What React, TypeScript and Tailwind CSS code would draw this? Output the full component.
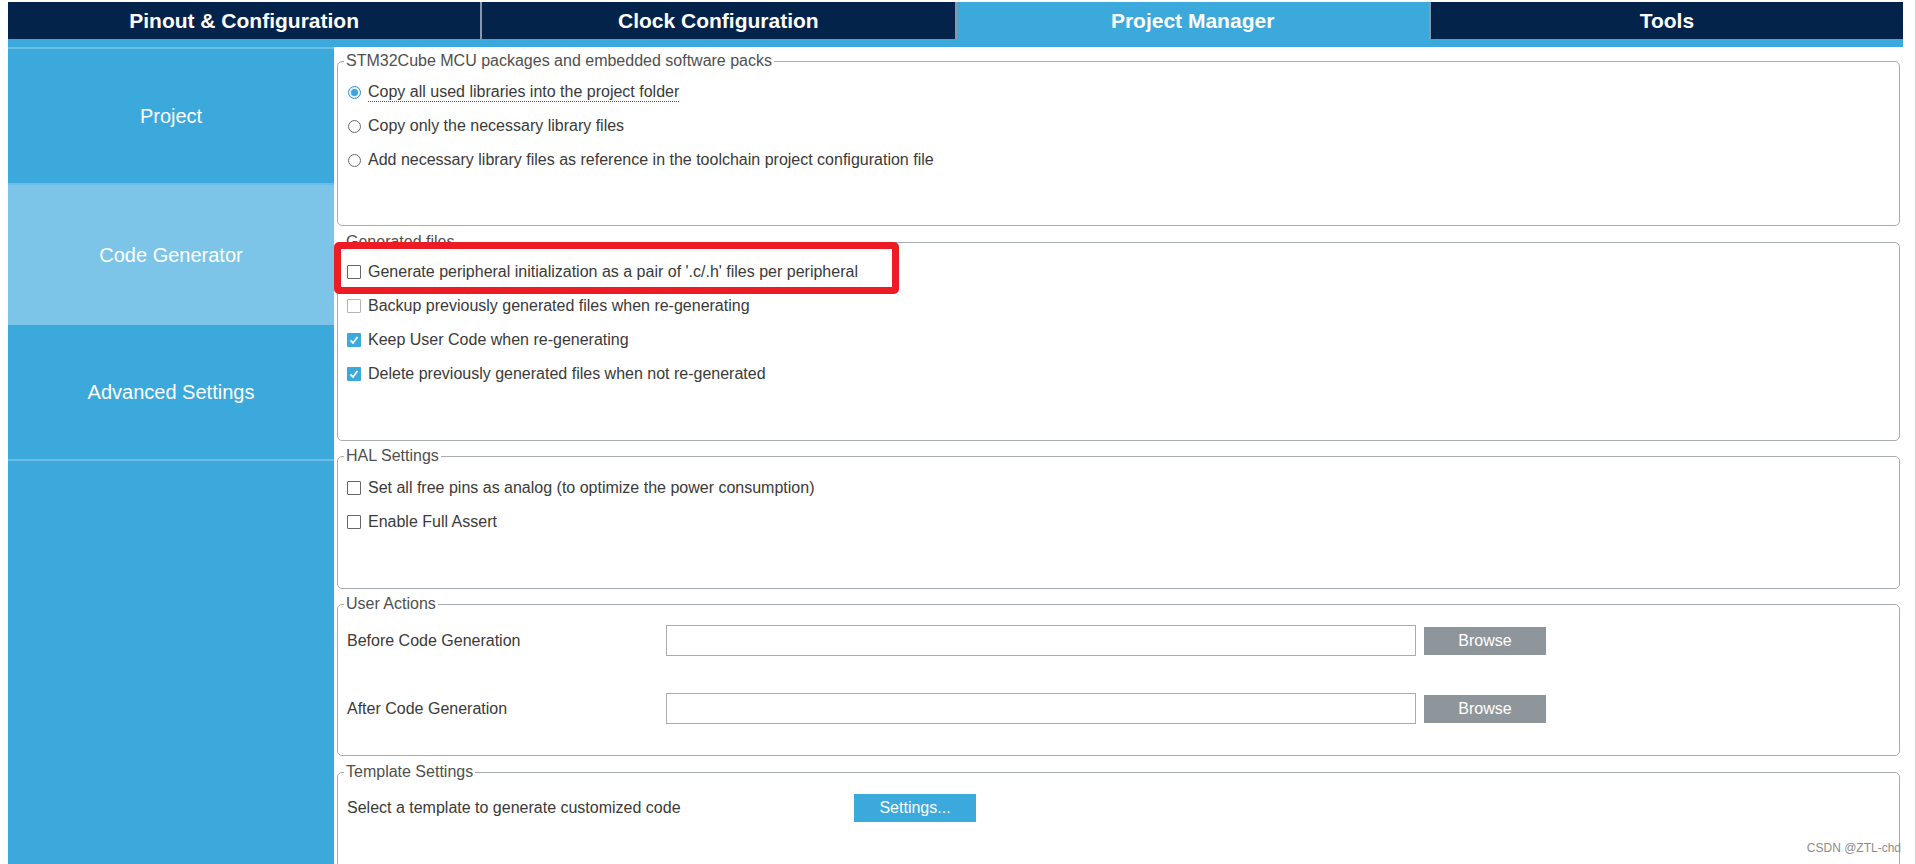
import type { ReactNode } from "react";

const tabs = ["Pinout & Configuration", "Clock Configuration", "Project Manager", "Tools"];

const sideItems = [
    { label: "Project", active: false, h: "h-[134px]" },
    { label: "Code Generator", active: true, h: "h-[140px]" },
    { label: "Advanced Settings", active: false, h: "h-[134px]" },
];

function GroupBox({ title, className, children }: { title: string; className: string; children: ReactNode }) {
    return (
        <fieldset className={`rounded-[5px] border border-[#a7acb0] ${className}`}>
            <legend className="ml-[6px] px-[2px] text-[16px] leading-[16px] text-[#4f4f4f]">{title}</legend>
            {children}
        </fieldset>
    );
}

function Radio({ checked, label, underline }: { checked?: boolean; label: string; underline?: boolean }) {
    return (
        <div className="flex h-[34px] items-center gap-[7px] pl-[9px]">
            <span
                className={`ml-[1px] flex h-[13px] w-[13px] shrink-0 items-center justify-center rounded-full border ${
                    checked ? "border-[#3a8fd0] bg-[#e3f2fb]" : "border-[#6a6a6a] bg-white"
                }`}
            >
                {checked && <span className="h-[7px] w-[7px] rounded-full bg-[#3ba3de]" />}
            </span>
            <span className={underline ? "border-b border-dotted border-[#555] leading-[19px]" : ""}>{label}</span>
        </div>
    );
}

function Checkbox({ checked, light, label }: { checked?: boolean; light?: boolean; label: string }) {
    return (
        <div className="flex h-[34px] items-center gap-[7px] pl-[9px]">
            {checked ? (
                <span className="flex h-[14px] w-[14px] shrink-0 items-center justify-center rounded-[1px] bg-[#3ba9dc]">
                    <svg width="12" height="12" viewBox="0 0 12 12">
                        <polyline points="2.5,6.5 5,9 9.5,3" fill="none" stroke="white" strokeWidth="1.8" />
                    </svg>
                </span>
            ) : (
                <span className={`h-[14px] w-[14px] shrink-0 rounded-[1px] border bg-white ${light ? "border-[#b3b3b3]" : "border-[#666]"}`} />
            )}
            <span>{label}</span>
        </div>
    );
}

function ActionRow({ label, className }: { label: string; className: string }) {
    return (
        <div className={`flex h-[31px] items-center pl-[9px] ${className}`}>
            <span className="w-[319px]">{label}</span>
            <div className="h-[31px] w-[750px] border border-[#a9abad] bg-white" />
            <button className="ml-[8px] h-[28px] w-[122px] bg-[#8f969b] text-[16px] text-white">Browse</button>
        </div>
    );
}

export default function App() {
    return (
        <div className="relative flex h-[864px] w-[1916px] flex-col overflow-hidden border-r border-[#cfd3d6] bg-white pl-[8px] pr-[12px] pt-[2px] font-['Liberation_Sans',Arial,sans-serif] text-[16px] text-[#3a3a3a]">
            {/* Top tabs */}
            <div className="flex h-[37px] shrink-0 bg-[#04234b]">
                {tabs.map((t, i) => (
                    <div
                        key={t}
                        className={`flex flex-1 items-center justify-center text-[21px] font-bold text-white ${
                            i > 0 ? "border-l-2 border-[#8a97a8]" : ""
                        } ${i === 2 ? "bg-[#3ba9dc]" : ""}`}
                    >
                        {t}
                    </div>
                ))}
            </div>
            <div className="h-[8px] shrink-0 bg-[#3ba9dc]" />

            <div className="flex min-h-0 flex-1">
                {/* Sidebar */}
                <aside className="flex w-[326px] shrink-0 flex-col bg-[#3ba9dc]">
                    <div className="h-[2px] bg-[#6cbde6]" />
                    {sideItems.map((s, i) => (
                        <div key={s.label} className="flex flex-col">
                            <div
                                className={`flex ${s.h} items-center justify-center text-[20px] text-white ${
                                    s.active ? "bg-[#7dc5e8]" : ""
                                }`}
                            >
                                {s.label}
                            </div>
                            {i !== 1 && <div className="h-[2px] bg-[#6cbde6]" />}
                        </div>
                    ))}
                </aside>

                {/* Content */}
                <main className="flex min-w-0 flex-1 flex-col px-[3px]">
                    <GroupBox title="STM32Cube MCU packages and embedded software packs" className="mt-[6px] h-[173px] shrink-0">
                        <div className="pt-[6px]">
                            <Radio checked underline label="Copy all used libraries into the project folder" />
                            <Radio label="Copy only the necessary library files" />
                            <Radio label="Add necessary library files as reference in the toolchain project configuration file" />
                        </div>
                    </GroupBox>

                    <div className="relative mt-[8px] shrink-0">
                        <GroupBox title="Generated files" className="h-[207px]">
                            <div className="pt-[5px]">
                                <Checkbox label="Generate peripheral initialization as a pair of '.c/.h' files per peripheral" />
                                <Checkbox light label="Backup previously generated files when re-generating" />
                                <Checkbox checked label="Keep User Code when re-generating" />
                                <Checkbox checked label="Delete previously generated files when not re-generated" />
                            </div>
                        </GroupBox>
                        <div className="absolute left-[-3px] top-[8px] h-[52px] w-[565px] rounded-[5px] border-[7px] border-[#ed1c24]" />
                    </div>

                    <GroupBox title="HAL Settings" className="mt-[7px] h-[141px] shrink-0">
                        <div className="pt-[7px]">
                            <Checkbox label="Set all free pins as analog (to optimize the power consumption)" />
                            <Checkbox label="Enable Full Assert" />
                        </div>
                    </GroupBox>

                    <GroupBox title="User Actions" className="mt-[7px] h-[160px] shrink-0">
                        <ActionRow label="Before Code Generation" className="mt-[13px]" />
                        <ActionRow label="After Code Generation" className="mt-[37px]" />
                    </GroupBox>

                    <GroupBox title="Template Settings" className="mt-[8px] h-[160px] shrink-0">
                        <div className="mt-[14px] flex h-[28px] items-center pl-[9px]">
                            <span className="w-[507px]">Select a template to generate customized code</span>
                            <button className="h-[28px] w-[122px] bg-[#3ba9dc] text-[16px] text-white">Settings...</button>
                        </div>
                    </GroupBox>
                </main>
            </div>

            <span className="absolute bottom-[7px] right-[14px] text-[12px] text-[#8c8c8c]">CSDN @ZTL-chd</span>
        </div>
    );
}
